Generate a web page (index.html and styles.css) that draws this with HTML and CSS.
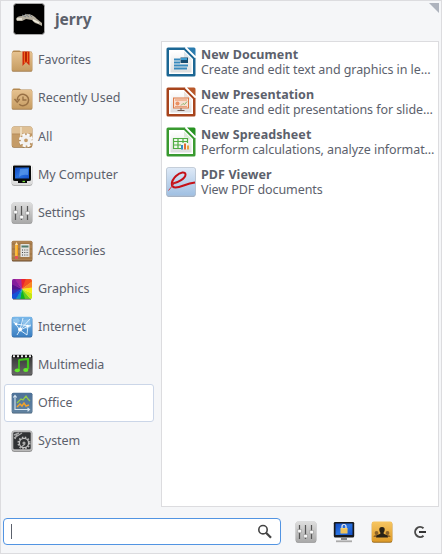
FILE: index.html
```html
<!DOCTYPE html>
<html lang="en">
<head>
<meta charset="utf-8">
<title>Menu</title>
<link rel="stylesheet" href="styles.css">
</head>
<body>
<svg class="defs" aria-hidden="true">
  <defs>
    <linearGradient id="tan" x2="0" y2="1"><stop stop-color="#e6c290"/><stop offset="1" stop-color="#c69c62"/></linearGradient>
    <linearGradient id="silver" x2="0" y2="1"><stop stop-color="#dedede"/><stop offset="1" stop-color="#a9a9a9"/></linearGradient>
    <linearGradient id="white" x2="0" y2="1"><stop stop-color="#fff"/><stop offset="1" stop-color="#d8d8d8"/></linearGradient>
    <linearGradient id="screen" x2="1" y2="1"><stop stop-color="#124ac0"/><stop offset=".5" stop-color="#2872e0"/><stop offset="1" stop-color="#1550c8"/></linearGradient>
    <linearGradient id="sky" x2="0" y2="1"><stop stop-color="#79b8ea"/><stop offset="1" stop-color="#3b7fc2"/></linearGradient>
    <linearGradient id="dark" x2="0" y2="1"><stop stop-color="#333"/><stop offset="1" stop-color="#686868"/></linearGradient>
    <linearGradient id="slate" x2="0" y2="1"><stop stop-color="#4d7198"/><stop offset="1" stop-color="#6283a0"/></linearGradient>
    <linearGradient id="gold" x2="0" y2="1"><stop stop-color="#f7c662"/><stop offset="1" stop-color="#dd9a28"/></linearGradient>
    <linearGradient id="pdf" x2="0" y2="1"><stop stop-color="#dfeaf7"/><stop offset="1" stop-color="#9fbfe2"/></linearGradient>
    <linearGradient id="paper" x2="0" y2="1"><stop stop-color="#fff"/><stop offset="1" stop-color="#dedede"/></linearGradient>
    <clipPath id="tile"><rect x="1" y="1" width="20" height="20" rx="1.5"/></clipPath>
    <g id="sliders">
      <rect x=".7" y=".7" width="20.6" height="21" rx="2" fill="#8c8c8c"/>
      <rect x=".7" y=".5" width="20.6" height="20.5" rx="2" fill="url(#silver)"/>
      <path d="M4.5 4v14M10.5 4v14M16.5 4v14" stroke="#555" stroke-width="1.2"/>
      <path d="M2.7 8.5h3.8v3.3H2.7zM8.7 13.5h3.8v3.3H8.7zM14.7 9.5h3.8v3.3h-3.8z" fill="#f8f8f8" stroke="#888" stroke-width=".5"/>
    </g>
  </defs>
</svg>
<main class="menu">
  <header class="user">
    <svg class="avatar" viewBox="0 0 32 32"><rect x=".5" y=".5" width="31" height="31" rx="3" fill="#000" stroke="#aaa"/><path d="M3 16q1-3 6-3c5-3 11-2 15 3l5 4v3l-4-2-3-1-3-3-6-1-4 2-5 0z" fill="#b5afa0"/><path d="M9 12l4 2M12 11l4 3M16 11l3 3" stroke="#7a838b" fill="none"/><path d="M4 16h5M20 17l6 3" stroke="#f1eee0" stroke-width="1.4"/></svg>
    <span class="name">jerry</span>
  </header>
  <svg class="corner" viewBox="0 0 10 10"><path d="M0 0h10v10z" fill="#aeb3bd"/></svg>
  <div class="panes">
    <nav class="categories">
      <div class="cat"><svg viewBox="0 0 22 22"><path d="M1 2l1.5-1.5h6L10 1.500h10q1 0 1 1v17H1z" fill="#b4884f"/><rect x=".8" y="2" width="20.5" height="19.7" rx="1.5" fill="#a58052"/><rect x=".8" y="2" width="20.5" height="18.700" rx="1.5" fill="url(#tan)"/><path d="M11.5 1.5h7v14L15 12l-3.5 4z" fill="#d22808"/><path d="M13.5 2v11M16.5 2v10" stroke="#ed6b20"/><path d="M15 2v9" stroke="#9d1800"/></svg><span>Favorites</span></div>
      <div class="cat"><svg viewBox="0 0 22 22"><path d="M1 2l1.5-1.5h6L10 1.500h10q1 0 1 1v17H1z" fill="#b4884f"/><rect x=".8" y="2" width="20.5" height="19.7" rx="1.5" fill="#a58052"/><rect x=".8" y="2" width="20.5" height="18.700" rx="1.5" fill="url(#tan)"/><path d="M6.2 12a5.7 5.7 0 1 1 2 4.3M3.5 11l2.7 3 2.5-3" fill="none" stroke="#987044" stroke-width="1.5"/><path d="M12 8.5V12h3.5" fill="none" stroke="#987044" stroke-width="1.3"/></svg><span>Recently Used</span></div>
      <div class="cat"><svg viewBox="0 0 22 22"><rect x=".8" y=".8" width="20.5" height="21" rx="2" fill="#98713f"/><rect x=".8" y=".5" width="20.5" height="20.5" rx="2" fill="#c49b67"/><path d="M1 2q0-1 1-1h18q1 0 1 1v6H1z" fill="#dfc095"/><path d="M1 8h20" stroke="#b58c5b"/><path d="M10 1v9" stroke="#ecdabb" stroke-width="2"/><circle cx="15" cy="15" r="5.8" fill="none" stroke="#8e6d45" stroke-width="3" stroke-dasharray="2.9 1.65" opacity=".5"/><circle cx="15" cy="14.3" r="5.6" fill="none" stroke="#fafafa" stroke-width="3" stroke-dasharray="2.9 1.5"/><circle cx="15" cy="14.3" r="3.6" fill="none" stroke="#f2f2f2" stroke-width="3.4"/></svg><span>All</span></div>
      <div class="cat"><svg viewBox="0 0 22 22"><rect x=".7" y=".7" width="20.6" height="21" rx="2.5" fill="#999"/><rect x=".7" y=".4" width="20.6" height="20.5" rx="2.5" fill="url(#white)"/><path d="M3 1.500h16q1 0 1 1v13q0 1.500-2 1.500h-2v2H7v-2H4q-2 0-2-1.500v-13q0-1 1-1z" fill="#080a0b"/><rect x="4" y="3.500" width="14" height="11" fill="url(#screen)"/><path d="M9 5h8v6q-6-1-9 2z" fill="#70a9ef" opacity=".55"/><path d="M11.500 17.500h2.500" stroke="#77df35" stroke-width="1.300"/></svg><span>My Computer</span></div>
      <div class="cat"><svg viewBox="0 0 22 22"><use href="#sliders"/></svg><span>Settings</span></div>
      <div class="cat"><svg viewBox="0 0 22 22"><rect x=".8" y="1" width="20.5" height="20.6" rx="1.5" fill="#68482a"/><rect x=".8" y=".8" width="20.5" height="19.8" rx="1.5" fill="#ad8252"/><path d="M1 4h20M1 9h20M1 14h20M1 18h20" stroke="#98703f"/><path d="M4 5l1.5-3L7 5v13H4z" fill="#f4a21c"/><path d="M4 5l1.5-3L7 5z" fill="#f7dfb8"/><path d="M5 5v11" stroke="#ffd267"/><path d="M4 16h3v3H4z" fill="#e05757"/><rect x="9.5" y="4" width="9" height="13" rx=".5" fill="#e3e3df"/><path d="M10.5 6.5h7" stroke="#507b6b" stroke-width="2"/><path d="M11 10h7M11 12.5h7M11 15h7" stroke="#444" stroke-dasharray="1 1.3"/></svg><span>Accessories</span></div>
      <div class="cat"><svg viewBox="0 0 22 22"><g clip-path="url(#tile)"><path d="M11 11L1-2h10z" fill="#a82a9c"/><path d="M11 11L10-4 20-2z" fill="#e82431"/><path d="M11 11L16-2 24 2z" fill="#f45020"/><path d="M11 11l13-10v9z" fill="#f98724"/><path d="M11 11l13-2v8z" fill="#faec12"/><path d="M11 11l13 6-2 7z" fill="#c6e711"/><path d="M11 11l11 13h-9z" fill="#66cf19"/><path d="M11 11l4 13H8z" fill="#10b323"/><path d="M11 11L9 24H2z" fill="#1297c2"/><path d="M11 11L3 24l-5-7z" fill="#1552d8"/><path d="M11 11L-2 18v-8z" fill="#3630b6"/><path d="M11 11L-2 12V4z" fill="#55158d"/><path d="M11 11L-2 5 2-2z" fill="#851e9c"/></g><path d="M2 21.3h18" stroke="#666" stroke-width=".8"/></svg><span>Graphics</span></div>
      <div class="cat"><svg viewBox="0 0 22 22"><rect x=".8" y="1" width="20.5" height="20.6" rx="2" fill="#30659b"/><rect x=".8" y=".7" width="20.5" height="20" rx="2" fill="url(#sky)"/><path d="M2 3l5-1 2 3-3 3-4-1zM12 4l7-1 1 8-5 2-3-4z" fill="#a6d2f2" opacity=".6"/><path d="M3 6l6 8L19 3M5 8l14 2M9 14l3-12M9 14l11-5M9 14l-3 5M9 14l7 5 1-10" fill="none" stroke="#e8f6ff" stroke-width=".9"/><circle cx="9" cy="13.5" r="2" fill="#fff"/><circle cx="5" cy="8" r="1.3" fill="#fff"/><circle cx="16.5" cy="10" r="1.2" fill="#fff"/></svg><span>Internet</span></div>
      <div class="cat"><svg viewBox="0 0 22 22"><rect x=".8" y="1" width="20.5" height="20.6" rx="1.5" fill="#292929"/><rect x=".8" y="1" width="20.5" height="19.8" rx="1.5" fill="url(#dark)"/><path d="M1 2.3h20" stroke="#151515" stroke-width="3"/><path d="M2 2.2h19" stroke="#eee" stroke-width="2" stroke-dasharray="2 2"/><path d="M8 6l9-1v10" fill="none" stroke="#42c51d" stroke-width="2.2"/><path d="M8 5.5v11" stroke="#42c51d" stroke-width="1.8"/><ellipse cx="6.3" cy="16.3" rx="2.6" ry="1.900" fill="#62e82d"/><ellipse cx="14.8" cy="16" rx="2.6" ry="1.900" fill="#62e82d"/></svg><span>Multimedia</span></div>
      <div class="cat selected"><svg viewBox="0 0 22 22"><rect x=".8" y="1" width="20.5" height="20.6" rx="1.5" fill="#3f5870"/><rect x=".8" y=".7" width="20.5" height="20" rx="1.5" fill="url(#slate)"/><path d="M4 4v13.500h14M2.300 5.500L4 3.400l1.700 2.100M16.500 16l2 1.600-2 1.600" fill="none" stroke="#d5e4ef" stroke-width="1.100"/><path d="M6 11l4-4 2 1 3-4 2 3 2 2" fill="none" stroke="#95c94a" stroke-width="1.300"/><path d="M6 15l3-3 2 2 2-3 2 3 3-1" fill="none" stroke="#f3a329" stroke-width="1.500"/></svg><span>Office</span></div>
      <div class="cat"><svg viewBox="0 0 22 22"><rect x=".7" y=".7" width="20.6" height="21" rx="2.5" fill="#777"/><rect x=".7" y=".4" width="20.6" height="20.6" rx="2.5" fill="#b9b9b9"/><rect x="2.3" y="2.3" width="17.4" height="17" rx="1.2" fill="#303234"/><circle cx="13" cy="13" r="5.7" fill="none" stroke="#b8b8b8" stroke-width="1.7" stroke-dasharray="1.5 1.5"/><circle cx="13" cy="13" r="4.6" fill="none" stroke="#c0c0c0" stroke-width="1.3"/><circle cx="13" cy="13" r="1.6" fill="#aaa"/><path d="M3 8l8-5M3 5l5-2M4 9l2-5M14 14l-5 4" stroke="#a7a7a7" stroke-width="1.4"/></svg><span>System</span></div>
    </nav>
    <section class="apps">
      <div class="app"><svg viewBox="0 0 30 30"><path d="M2 .5h17L29.5 11v17q0 1.5-1.5 1.5H2Q.5 29.500.5 28V2Q.5.5 2 .5z" fill="#1c6794"/><path d="M21 .5h7q1.500 0 1.500 1.500v7z" fill="#2b7caf"/><path d="M19.500.7L29.300 10.500" stroke="#fff" stroke-width="1.300"/><path d="M3 3h15l9 9v15H3z" fill="#fff"/><path d="M4.500 4.500h13L25.500 12.500V25.500h-21z" fill="url(#paper)"/><path d="M18 4.500l8 8h-8z" fill="#dce5ea"/><path d="M8 12.500h6M8 15.500h6M8 18.500h14M8 21.500h13" stroke="#3789bd" stroke-width="2"/><rect x="14.500" y="10.500" width="7.500" height="5.500" fill="#174c70"/><path d="M15 12h6" stroke="#3f9cd0" stroke-width="2"/></svg><div class="text"><b>New Document</b><span>Create and edit text and graphics in le…</span></div></div>
      <div class="app"><svg viewBox="0 0 30 30"><path d="M2 .5h17L29.5 11v17q0 1.5-1.5 1.5H2Q.5 29.500.5 28V2Q.5.5 2 .5z" fill="#a7441c"/><path d="M21 .5h7q1.500 0 1.500 1.500v7z" fill="#b9592b"/><path d="M19.500.7L29.300 10.500" stroke="#fff" stroke-width="1.300"/><path d="M3 3h15l9 9v15H3z" fill="#fff"/><path d="M4.500 4.500h13L25.500 12.500V25.500h-21z" fill="url(#paper)"/><path d="M18 4.500l8 8h-8z" fill="#ebe2dc"/><rect x="7.500" y="11" width="15" height="10" fill="#f8dfd1" stroke="#dc7845"/><path d="M9 13h12" stroke="#e99063"/><circle cx="11.500" cy="16.500" r="2" fill="#e99063"/><path d="M15 18.500l2-2 1.500 1 2.500-3" fill="none" stroke="#8bb66b"/><path d="M9 19.500h12" stroke="#e5a07c"/><path d="M15 21v2M11.500 23.500h7" stroke="#725b50"/></svg><div class="text"><b>New Presentation</b><span>Create and edit presentations for slide…</span></div></div>
      <div class="app"><svg viewBox="0 0 30 30"><path d="M2 .5h17L29.5 11v17q0 1.5-1.5 1.5H2Q.5 29.500.5 28V2Q.5.5 2 .5z" fill="#399a30"/><path d="M21 .5h7q1.500 0 1.500 1.500v7z" fill="#279322"/><path d="M19.500.7L29.300 10.500" stroke="#fff" stroke-width="1.300"/><path d="M3 3h15l9 9v15H3z" fill="#fff"/><path d="M4.500 4.500h13L25.500 12.500V25.500h-21z" fill="url(#paper)"/><path d="M18 4.500l8 8h-8z" fill="#dde9d9"/><rect x="7" y="10.500" width="15" height="11.500" fill="#eef7ea"/><path d="M7 11.500h15M7 14.500h15M7 18h8M7 21.500h8M7.500 11v11M12 11v11M17 11v5M21.500 11v5" stroke="#4fac42" stroke-width="1.200"/><path d="M16 18v4.500" stroke="#3988c5" stroke-width="2"/><path d="M19 16.500v6" stroke="#e46d35" stroke-width="2"/><path d="M22 18.500v4" stroke="#e9a040" stroke-width="2"/></svg><div class="text"><b>New Spreadsheet</b><span>Perform calculations, analyze informat…</span></div></div>
      <div class="app"><svg viewBox="0 0 30 30"><rect x=".5" y=".8" width="29" height="29" rx="2" fill="#8195ae"/><rect x=".5" y=".5" width="29" height="28.400" rx="2" fill="url(#pdf)" stroke="#b3bdca" stroke-width=".6"/><path d="M7 16.500C12 15.500 19.500 11.500 19.500 7.500c0-3-5-3-9.500 1.500C4.500 14.500 4.500 20.500 9.500 20.500c6 0 10-4 19.500-5" fill="none" stroke="#c51118" stroke-width="2"/><path d="M2.500 23.500l7-8.500" stroke="#d02c30" stroke-width=".9"/></svg><div class="text"><b>PDF Viewer</b><span>View PDF documents</span></div></div>
    </section>
  </div>
  <footer class="bar">
    <div class="search"><i class="caret"></i><svg viewBox="0 0 16 16"><circle cx="6" cy="5.7" r="4.200" fill="none" stroke="#444" stroke-width="1.6"/><path d="M9 8.700l5 5" stroke="#444" stroke-width="2.300"/></svg></div>
    <div class="actions">
      <svg viewBox="0 0 22 22"><use href="#sliders"/></svg>
      <svg viewBox="0 0 22 22"><path d="M2 1h18q1.200 0 1.200 1.200V15q0 1.500-1.500 1.500H2.300Q.8 16.500.8 15V2.200Q.8 1 2 1z" fill="#17191c"/><rect x="2.500" y="2.500" width="17" height="11.500" fill="url(#screen)"/><path d="M8 17h6v2H8z" fill="#888"/><path d="M3 20.300h16" fill="none" stroke="#aaa" stroke-width="1.800"/><path d="M9 7V5.500q0-2 2-2t2 2V7" fill="none" stroke="#eee" stroke-width="1.200"/><rect x="7.500" y="7" width="7" height="5.500" fill="#f7cf68"/><path d="M8 9h6M8 11h6" stroke="#dfa43c" stroke-width=".6"/></svg>
      <svg viewBox="0 0 22 22"><rect x=".8" y="1" width="20.500" height="20.700" rx="2" fill="#9b6b1d"/><rect x=".8" y=".6" width="20.500" height="20.200" rx="2" fill="url(#gold)"/><g fill="#8b6228"><circle cx="5.500" cy="12" r="1.900"/><circle cx="16.500" cy="12" r="1.900"/><path d="M2.500 16q0-2 3-2h11q3 0 3 2z"/></g><path d="M11 6q3 0 2.700 3-.3 2-1.300 3 .2 1 2.100 1.500Q17 14 17 16.500H5q0-2.500 2.500-3 1.900-.5 2.100-1.500-1-1-1.300-3Q8 6 11 6z" fill="#282116"/></svg>
      <svg viewBox="0 0 22 22"><path d="M14.500 7.300A5 5 0 1 0 14.500 14.700" fill="none" stroke="#4a4a4a" stroke-width="2"/><path d="M10 11h7" stroke="#333" stroke-width="2"/></svg>
    </div>
  </footer>
</main>
</body>
</html>
```
FILE: styles.css
```css
* { box-sizing: border-box; }
body { margin: 0; font-family: "Noto Sans", sans-serif; font-size: 12.5px; color: #5c616c; }
svg { display: block; flex: none; }
.defs { position: absolute; width: 0; height: 0; }
.menu { position: relative; width: 442px; height: 554px; display: flex; flex-direction: column; background: #f5f6f8; border: 1px solid #dcdcdf; }
.user { height: 40px; flex: none; display: flex; align-items: center; gap: 10px; padding: 0 0 4px 12px; }
.avatar { width: 32px; height: 32px; }
.name { font-size: 15.5px; font-weight: 700; line-height: 20px; padding-bottom: 1px; }
.corner { position: absolute; right: 2px; top: 2px; width: 10px; height: 10px; }
.panes { height: 466px; flex: none; display: flex; gap: 7px; padding: 0 2px 0 3px; }
.categories { width: 150px; padding-top: 1px; }
.cat { height: 38px; display: flex; align-items: center; gap: 5px; padding-left: 6px; border: 1px solid transparent; border-radius: 3px; }
.cat svg { width: 22px; height: 22px; }
.cat span { line-height: 18px; padding-bottom: 2px; letter-spacing: -.04px; }
.cat:nth-child(n+3) span { padding-bottom: 0; }
.selected { background: #fff; border-color: #cbd6e8; }
.apps { flex: 1; min-width: 0; background: #fff; border: 1px solid #dcdcdf; padding: 5px 0 0 4px; }
.app { height: 40px; display: flex; gap: 5px; }
.app svg { width: 30px; height: 30px; }
.text { display: flex; flex-direction: column; line-height: 15px; white-space: nowrap; }
.text b { letter-spacing: .09px; }
.text span { letter-spacing: -.07px; }
.bar { height: 46px; display: flex; align-items: center; padding: 3px 0 0 2px; }
.search { width: 278px; height: 27px; display: flex; align-items: center; justify-content: space-between; padding: 0 7px; background: #fff; border: 1px solid #5294e2; border-radius: 4px; }
.search svg { width: 16px; height: 16px; }
.caret { width: 1px; height: 15px; background: #5c616c; }
.actions { display: flex; gap: 16px; margin-left: 14px; }
.actions svg { width: 22px; height: 22px; }
```
